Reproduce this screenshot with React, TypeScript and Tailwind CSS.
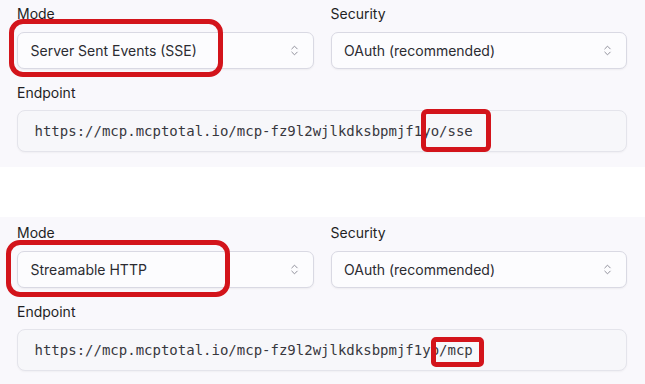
import React from "react";
import { ChevronsUpDown } from "lucide-react";

function Select({ value }: { value: string }) {
  return (
    <div className="mt-[8px] flex h-[37px] items-center justify-between rounded-[7px] border-[1.5px] border-[#d9d9e3] bg-[#fcfcfe] pl-[12.5px] pr-[12px] shadow-[0_1px_2px_rgba(0,0,0,0.05)]">
      <span className="text-[14px] leading-5 text-[#2b2b31]">{value}</span>
      <ChevronsUpDown size={13} strokeWidth={1.8} className="text-[#8d8d98]" />
    </div>
  );
}

function Section({ mode, endpoint, pt }: { mode: string; endpoint: string; pt: string }) {
  return (
    <div className={`h-[167px] bg-[#f9f8fc] pl-[17px] pr-[18px] ${pt}`}>
      <div className="grid grid-cols-2 gap-x-[17px]">
        <div>
          <div className="h-5 text-[14px] leading-5 text-[#1f1f24]">Mode</div>
          <Select value={mode} />
        </div>
        <div>
          <div className="h-5 text-[14px] leading-5 text-[#1f1f24]">Security</div>
          <Select value="OAuth (recommended)" />
        </div>
      </div>
      <div className="mt-[14px] h-5 text-[14px] leading-5 text-[#1f1f24]">Endpoint</div>
      <div className="mt-[7px] flex h-[42px] items-center rounded-[8px] border-[1.5px] border-[#e4e4eb] bg-[#f7f7fa] pl-[16.5px] shadow-[0_1px_2px_rgba(0,0,0,0.04)]">
        <span className="text-[14px] leading-5 text-[#38383e]" style={{ fontFamily: '"DejaVu Sans Mono", "Liberation Mono", monospace' }}>
          {endpoint}
        </span>
      </div>
    </div>
  );
}

export default function App() {
  return (
    <div
      className="relative h-[384px] w-[645px] overflow-hidden bg-white"
      style={{ fontFamily: 'Inter, "Noto Sans", sans-serif' }}
    >
      <Section
        mode="Server Sent Events (SSE)"
        endpoint="https://mcp.mcptotal.io/mcp-fz9l2wjlkdksbpmjf1yo/sse"
        pt="pt-[4px]"
      />
      <div className="h-[50px] bg-white" />
      <Section
        mode="Streamable HTTP"
        endpoint="https://mcp.mcptotal.io/mcp-fz9l2wjlkdksbpmjf1yo/mcp"
        pt="pt-[6px]"
      />
      <div className="absolute left-[9px] top-[19px] h-[58px] w-[214px] rounded-[14px] border-[5px] border-[#d3141b]" />
      <div className="absolute left-[6px] top-[240px] h-[57px] w-[224px] rounded-[14px] border-[5px] border-[#d3141b]" />
      <div className="absolute left-[421px] top-[109px] h-[43px] w-[70px] rounded-[6px] border-[5px] border-[#d3141b]" />
      <div className="absolute left-[431px] top-[337px] h-[30px] w-[53px] rounded-[5px] border-[5px] border-[#d3141b]" />
    </div>
  );
}
